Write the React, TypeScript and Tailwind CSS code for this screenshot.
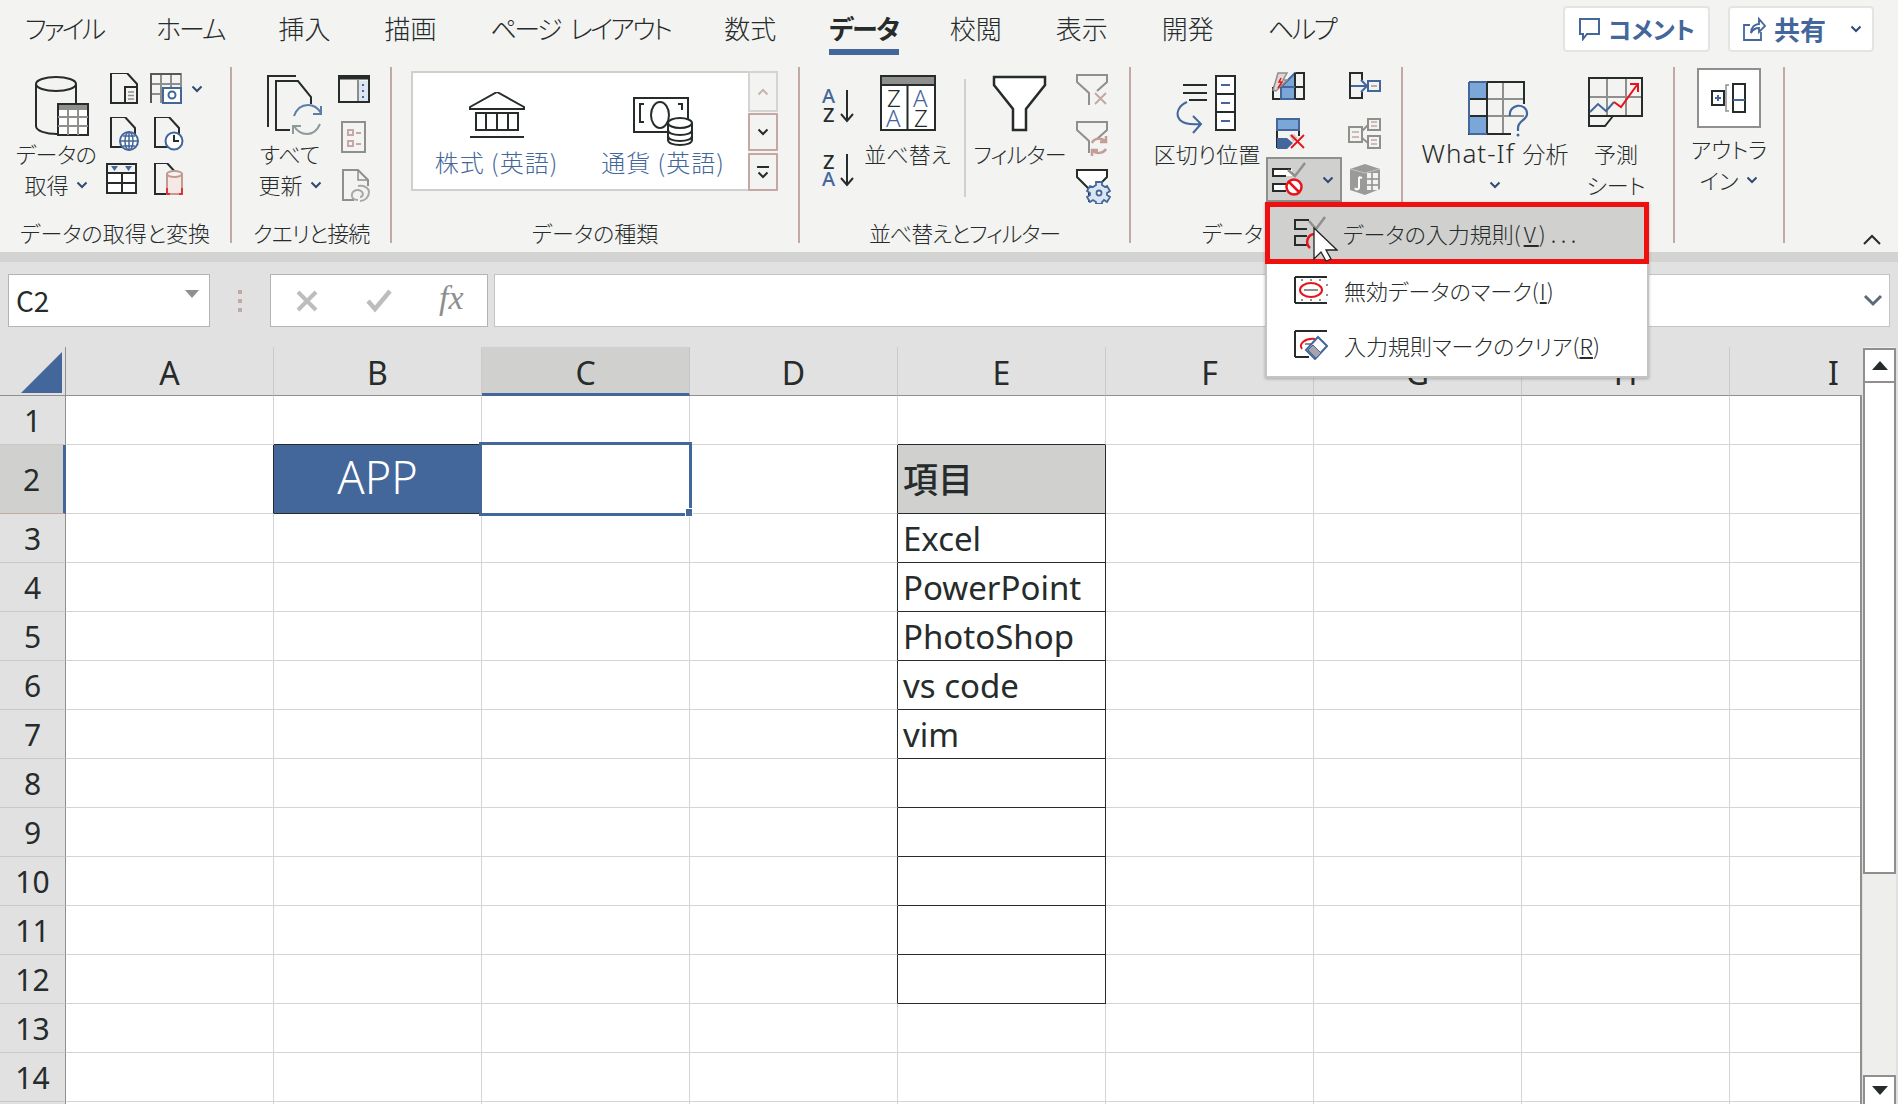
import React from 'react';
import { clsx } from 'clsx';

const D = '#262b2b';
const B = '#44679b';
const G = '#8f8f8d';
const R = '#c4a8a4';
const RED = '#e8141c';
const LB = '#7aa6d8';

function Ic({ x, y, w, h, children, className }: { x: number; y: number; w: number; h: number; children?: React.ReactNode; className?: string }) {
  return (
    <svg width={w} height={h} viewBox={`${x} ${y} ${w} ${h}`} fill="none" className={clsx('block shrink-0', className)}>
      {children}
    </svg>
  );
}
const doc = (x: number, y: number, w: number, h: number) => `M${x + w} ${y + h}H${x}V${y}H${x + w - 10}L${x + w} ${y + 11}V${y + h}`;
const SF = "'Noto Sans','Noto Sans CJK JP',sans-serif";

function Chev({ c = '#2f4a73', w = 12 }: { c?: string; w?: number }) {
  return (
    <svg width={w} height={8} viewBox="0 0 12 8" fill="none" className="block shrink-0">
      <path d="M1.5 1.5 6 6l4.5-4.5" stroke={c} strokeWidth="2" />
    </svg>
  );
}

function Sep() {
  return <div className="w-[2px] h-[176px] mt-[7px] bg-[#c4a8a4] shrink-0" />;
}

function Group({ className, label, labelClass, children }: { className: string; label?: string; labelClass?: string; children: React.ReactNode }) {
  return (
    <section className={clsx('flex flex-col shrink-0', className)}>
      <div className="flex h-[161px]">{children}</div>
      <div className={clsx('text-center text-[22px] leading-[22px] h-[22px] whitespace-nowrap', labelClass)}>{label}</div>
    </section>
  );
}

function Big({ className, icon, l1, l2 }: { className: string; icon: React.ReactNode; l1: React.ReactNode; l2?: React.ReactNode }) {
  return (
    <div className={clsx('flex flex-col items-center pt-[15px] shrink-0', className)}>
      {icon}
      <div className="mt-[1px] text-[22px] leading-[31px] whitespace-nowrap text-center">{l1}</div>
      <div className="flex items-center gap-[7px] text-[22px] leading-[31px] h-[31px] whitespace-nowrap">{l2}</div>
    </div>
  );
}

const TABS: [string, string][] = [
  ['ファイル', 'tracking-[-3px]'],
  ['ホーム', 'tracking-[-2px] -ml-[1px]'],
  ['挿入', ''],
  ['描画', ''],
  ['ページ レイアウト', 'tracking-[-2.6px] [word-spacing:7px]'],
  ['数式', ''],
  ['データ', 'tracking-[-1.3px] -ml-[1px]'],
  ['校閲', '-ml-[3px]'],
  ['表示', ''],
  ['開発', ''],
  ['ヘルプ', 'tracking-[-2.5px]'],
];

function TabBar() {
  return (
    <div className="h-[60px] flex items-start">
      <div className="flex gap-[54px] pl-[25px] text-[26px] leading-[56px] whitespace-nowrap">
        {TABS.map(([t, tr]) =>
          t === 'データ' ? (
            <div key={t} className={clsx('relative font-bold', tr)}>
              {t}
              <div className="absolute left-0 right-0 top-[49px] h-[6px] bg-[#44679b]" />
            </div>
          ) : (
            <div key={t} className={tr}>{t}</div>
          ),
        )}
      </div>
      <div className="ml-auto mr-[24px] mt-[6px] flex gap-[18px] text-[#44679b] font-bold text-[24px] leading-[42px]">
        <div className="w-[147px] h-[46px] bg-white border-2 border-[#e4e4e2] rounded-[4px] flex items-center justify-center gap-[8px]">
          <svg width="22" height="24" viewBox="0 0 22 24" fill="none">
            <path d="M2 2h19v15H9l-4 5v-5H2z" stroke={B} strokeWidth="2" />
          </svg>
          コメント
        </div>
        <div className="w-[146px] h-[46px] bg-white border-2 border-[#e4e4e2] rounded-[4px] flex items-center pl-[12px] gap-[8px] text-[26px]">
          <svg width="24" height="26" viewBox="0 0 24 26" fill="none">
            <path d="M19 16v8H2V9h6M9 17c0-6 4-9 8-9V3l6 7-6 6v-4c-3 0-6 1-8 5z" stroke={B} strokeWidth="1.8" />
          </svg>
          共有
          <span className="ml-[16px] flex"><Chev /></span>
        </div>
      </div>
    </div>
  );
}

function GetData() {
  return (
    <Group className="w-[230px]" label="データの取得と変換">
      <Big
        className="ml-[17px] w-[78px]"
        icon={
          <Ic x={17} y={75} w={78} h={62}>
            <path d="M36 84v42c0 5 10 8 21 8" stroke={D} strokeWidth="2" />
            <path d="M76 84v19" stroke={D} strokeWidth="2" />
            <ellipse cx="56" cy="84" rx="20" ry="7" stroke={D} strokeWidth="2" fill="#f3f3f1" />
            <rect x="58" y="104" width="30" height="31" fill="#fff" stroke={D} strokeWidth="2" />
            <rect x="59" y="105" width="28" height="5" fill={G} />
            <path d="M58 117h30M58 126h30M68 110v25M78 110v25" stroke={G} strokeWidth="2" />
          </Ic>
        }
        l1={<span className="tracking-[-0.5px]">データの</span>}
        l2={<>取得 <Chev /></>}
      />
      <div className="ml-[11px] mt-[13px] grid grid-cols-[44px_60px] grid-rows-[44px_46px_36px]">
        <Ic x={106} y={73} w={44} h={44}>
          <path d={doc(111, 73, 26, 30)} stroke={D} strokeWidth="2" />
          <rect x="125" y="87" width="12" height="16" fill="#f3f3f1" stroke={D} strokeWidth="2" />
          <path d="M128 92h6M128 95.500h6M128 99h6" stroke={G} strokeWidth="1.500" />
        </Ic>
        <div className="flex">
          <Ic x={150} y={73} w={41} h={44}>
            <path d="M151 103V74h30v14M161 74v29M171 74v14M151 84h30M151 94h12" stroke={G} strokeWidth="2" />
            <path d="M151 103V74h30" stroke="#55595a" strokeWidth="2" />
            <rect x="163" y="88" width="18" height="15" fill="#fff" stroke={B} strokeWidth="2" />
            <circle cx="172" cy="95" r="3.500" stroke={B} strokeWidth="2" />
          </Ic>
          <span className="mt-[12px] block"><Chev /></span>
        </div>
        <Ic x={106} y={117} w={44} h={46}>
          <path d={doc(111, 117, 24, 30)} stroke={D} strokeWidth="2" />
          <circle cx="129" cy="141" r="9" fill="#fff" stroke={B} strokeWidth="2" />
          <path d="M120 141h18M129 132v18M123 136h12M123 146h12" stroke={B} strokeWidth="1.500" />
          <ellipse cx="129" cy="141" rx="4" ry="9" stroke={B} strokeWidth="1.500" />
        </Ic>
        <Ic x={150} y={117} w={60} h={46}>
          <path d={doc(155, 117, 24, 30)} stroke={D} strokeWidth="2" />
          <circle cx="174" cy="141" r="8.500" fill="#fff" stroke={B} strokeWidth="2" />
          <path d="M174 135v6h5" stroke={D} strokeWidth="2" />
        </Ic>
        <Ic x={106} y={163} w={44} h={36}>
          <rect x="107" y="164" width="29" height="29" fill="#fff" stroke={D} strokeWidth="2" />
          <path d="M107 173h29M107 183h29M122 173v20" stroke={D} strokeWidth="2" />
          <rect x="108" y="165" width="27" height="7" fill="#f3f3f1" />
          <path d="M111 166h7l-3.500 5zM125 166h7l-3.500 5z" fill={B} />
        </Ic>
        <Ic x={150} y={163} w={60} h={36}>
          <path d={doc(155, 163, 22, 31)} stroke={D} strokeWidth="2" />
          <rect x="167" y="174" width="15" height="20" fill="#f6e8e4" stroke="#c49a90" strokeWidth="2" />
          <ellipse cx="174.500" cy="174" rx="7.500" ry="3" fill="#f3f3f1" stroke="#c49a90" strokeWidth="2" />
          <path d="M167 188v6h3M182 188v6h-3" stroke={RED} strokeWidth="1.500" />
        </Ic>
      </div>
    </Group>
  );
}

function Queries() {
  return (
    <Group className="w-[158px]" label="クエリと接続" labelClass="tracking-[-1px]">
      <Big
        className="ml-[18px] w-[80px]"
        icon={
          <Ic x={258} y={75} w={64} h={62}>
            <path d="M268 127V76h28" stroke={D} strokeWidth="2" />
            <path d="M290 130h-14V81h22l13 16v7" stroke={D} strokeWidth="2" />
            <path d="M294 116c3-8 9-11 14-11 6 0 10 3 13 8M321 106v8h-8" stroke="#5b7ea8" strokeWidth="2" />
            <path d="M320 124c-3 7-8 10-13 10-6 0-10-3-13-8M293 134v-8h8" stroke="#8d9a9c" strokeWidth="2" />
          </Ic>
        }
        l1="すべて"
        l2={<>更新 <Chev /></>}
      />
      <div className="mt-[13px] flex flex-col">
        <Ic x={330} y={73} w={60} h={44}>
          <rect x="339" y="76" width="30" height="26" stroke={D} strokeWidth="2" />
          <path d="M339 78h30" stroke={D} strokeWidth="3" />
          <path d="M358 80v22" stroke={D} strokeWidth="1" />
          <rect x="359" y="81" width="9" height="20" fill="#dbe5f1" />
          <path d="M363 84v2M363 90v2M363 96v2" stroke={B} strokeWidth="2" />
        </Ic>
        <Ic x={330} y={117} w={60} h={46}>
          <rect x="342" y="122" width="23" height="30" stroke={G} strokeWidth="2" />
          <rect x="348" y="130" width="5" height="5" stroke={R} strokeWidth="2" />
          <rect x="348" y="141" width="5" height="5" stroke={R} strokeWidth="2" />
          <path d="M356 133h5M356 144h5" stroke={R} strokeWidth="2" />
        </Ic>
        <Ic x={330} y={163} w={60} h={44}>
          <path d="M354 200h-11v-30h15l10 10v6" stroke={G} strokeWidth="2" />
          <path d="M358 170v10h10" stroke={G} strokeWidth="1.500" />
          <path d="M358 200c-5 0-7-3-6-6 1-4 6-5 9-3 3 2 2 6-1 6M358 186c6-1 11 2 11 6 0 5-4 9-9 9" stroke="#a8a8a6" strokeWidth="2" />
        </Ic>
      </div>
    </Group>
  );
}

function DataTypes() {
  return (
    <Group className="w-[406px]" label="データの種類">
      <div className="ml-[19px] mt-[11px] flex">
        <div className="w-[337px] h-[120px] bg-white border-2 border-r-0 border-[#cfcfcd] flex text-[24px] tracking-[1px] leading-[30px] text-[#44679b] whitespace-nowrap">
          <div className="w-[167px] flex flex-col items-center pt-[19px]">
            <Ic x={466} y={92} w={60} h={54}>
              <path d="M469 107 496 92l27 15v2h-54zM474 113h44M474 130h44M469 137h54" stroke={D} strokeWidth="2" />
              <path d="M475 113v17M485 113v17M496 113v17M507 113v17M517 113v17" stroke={D} strokeWidth="2" />
            </Ic>
            <div className="mt-[1px]">株式 (英語)</div>
          </div>
          <div className="w-[166px] flex flex-col items-center pt-[19px]">
            <Ic x={635} y={92} w={60} h={54}>
              <rect x="636" y="98" width="54" height="34" stroke={D} strokeWidth="2" />
              <path d="M646 122h-4v-18h4M680 104h4v6" stroke={D} strokeWidth="2" />
              <ellipse cx="662" cy="115" rx="9" ry="13" stroke={D} strokeWidth="2" />
              <path d="M670 123v17c0 3 5 5 12 5s12-2 12-5v-17" fill="#fff" stroke={D} strokeWidth="2" />
              <ellipse cx="682" cy="123" rx="12" ry="5" fill="#fff" stroke={D} strokeWidth="2" />
              <path d="M670 130c0 3 5 5 12 5s12-2 12-5M670 136c0 3 5 5 12 5s12-2 12-5" stroke={D} strokeWidth="2" />
            </Ic>
            <div className="mt-[1px]">通貨 (英語)</div>
          </div>
        </div>
        <div className="w-[30px] flex flex-col">
          <div className="h-[41px] border-2 border-[#d4d4d2] flex items-center justify-center">
            <span className="rotate-180 flex"><Chev c="#c9b3af" /></span>
          </div>
          <div className="h-[38px] mt-[1px] border-2 border-[#c4a8a4] flex items-center justify-center"><Chev c={D} /></div>
          <div className="h-[38px] mt-[2px] border-2 border-[#c4a8a4] flex flex-col items-center justify-center gap-[3px]">
            <div className="w-[12px] h-[2px] bg-[#262b2b]" />
            <Chev c={D} />
          </div>
        </div>
      </div>
    </Group>
  );
}

const txt = { fontFamily: SF };

function SortFilter() {
  return (
    <Group className="w-[329px]" label="並べ替えとフィルター" labelClass="tracking-[-1.1px]">
      <div className="ml-[20px] w-[36px] pt-[24px] flex flex-col shrink-0">
        <Ic x={820} y={84} w={36} h={66}>
          <text x="822" y="103" fontSize="20" fontWeight="500" fill={B} {...txt}>A</text>
          <text x="823" y="122" fontSize="20" fontWeight="500" fill={D} {...txt}>Z</text>
          <path d="M847 90v31M841 114l6 7 6-7" stroke={D} strokeWidth="2" />
        </Ic>
        <Ic x={820} y={150} w={36} h={40}>
          <text x="823" y="169" fontSize="20" fontWeight="500" fill={D} {...txt}>Z</text>
          <text x="822" y="186" fontSize="20" fontWeight="500" fill={B} {...txt}>A</text>
          <path d="M847 154v31M841 178l6 7 6-7" stroke={D} strokeWidth="2" />
        </Ic>
      </div>
      <Big
        className="w-[103px]"
        icon={
          <Ic x={879} y={75} w={58} h={62}>
            <rect x="881" y="76" width="54" height="54" fill="#fff" stroke={D} strokeWidth="2" />
            <rect x="882" y="77" width="52" height="7" fill={G} />
            <path d="M881 85h54M907.500 85v45" stroke={D} strokeWidth="2" />
            <text x="887" y="107" fontSize="24" fill={D} {...txt}>Z</text>
            <text x="886" y="127" fontSize="24" fill={B} {...txt}>A</text>
            <text x="913" y="107" fontSize="24" fill={B} {...txt}>A</text>
            <text x="914" y="127" fontSize="24" fill={D} {...txt}>Z</text>
          </Ic>
        }
        l1="並べ替え"
      />
      <div className="ml-[5px] w-[2px] h-[118px] mt-[19px] bg-[#d0d0ce] shrink-0" />
      <Big
        className="w-[107px]"
        icon={
          <Ic x={990} y={75} w={62} h={62}>
            <path d="M995 77h51v8l-19 24v21h-13v-21l-19-24z" fill="#fff" stroke={D} strokeWidth="2.500" />
          </Ic>
        }
        l1={<span className="tracking-[-0.8px]">フィルター</span>}
      />
      <div className="mt-[13px] flex flex-col">
        <Ic x={1073} y={73} w={38} h={48}>
          <path d="M1089 105V93L1077 82V75h30v7l-10 9" stroke={G} strokeWidth="2" />
          <path d="M1095 93l11 11M1106 93l-11 11" stroke={R} strokeWidth="2" />
        </Ic>
        <Ic x={1073} y={121} w={38} h={47}>
          <path d="M1089 153V141L1077 130V122h30v8l-10 9" stroke={G} strokeWidth="2" />
          <path d="M1092 143c2-5 10-6 14-1M1106 149c-3 5-10 5-14 1M1106 136v6h-6M1092 156v-6h6" stroke="#c29e99" strokeWidth="2.500" />
        </Ic>
        <Ic x={1073} y={168} w={38} h={36}>
          <path d="M1090 201h-1V189L1077 177V170h30v7l-10 10" stroke={D} strokeWidth="2" fill="#fff" />
          <path d="M1096 186v-3h6v3l3 2 2-1 3 5-3 2v2l3 2-3 5-3-2-2 2v2h-6v-2l-3-2-3 2-3-5 3-2v-2l-3-2 3-5 3 1z" fill="#dbe5f1" stroke={B} strokeWidth="1.800" transform="translate(0 -1)" />
          <circle cx="1099" cy="193" r="2.500" fill="#fff" stroke={B} strokeWidth="1.800" />
        </Ic>
      </div>
    </Group>
  );
}

function DataTools() {
  return (
    <Group className="w-[270px]" label="データ ツール">
      <Big
        className="ml-[21px] w-[110px]"
        icon={
          <Ic x={1172} y={75} w={68} h={62}>
            <path d="M1182 85h24M1182 93h24M1188 100h18" stroke={D} strokeWidth="2" />
            <rect x="1215" y="76" width="19" height="54" fill="#fff" stroke={D} strokeWidth="2" />
            <path d="M1215 94h19M1215 112h19" stroke={D} strokeWidth="2" />
            <path d="M1220 85h9M1220 103h9M1220 121h9" stroke={B} strokeWidth="2" />
            <path d="M1186 102c-9 4-12 12-7 18 3 3 10 5 21 4M1192 116l8 8-8 9" stroke={B} strokeWidth="2" />
          </Ic>
        }
        l1="区切り位置"
      />
      <div className="ml-[4px] mt-[12px] w-[76px] flex flex-col shrink-0">
        <Ic x={1266} y={72} w={76} h={45}>
          <path d="M1273 87v12h31V73h-9" stroke={D} strokeWidth="2" />
          <path d="M1295 73 1281 87v12h14z" fill={LB} stroke={B} strokeWidth="2" />
          <path d="M1273 87h31M1295 73v26" stroke={D} strokeWidth="2" />
          <path d="M1281 87h14" stroke={B} strokeWidth="2" />
          <path d="M1273 90l5-17h9l-4 7h4l-11 11z" fill="#e0d8d4" stroke={G} strokeWidth="1.500" />
          <path d="M1281 78l-2 4h3l-4 6" stroke={RED} strokeWidth="1.500" />
        </Ic>
        <Ic x={1266} y={117} w={76} h={40}>
          <path d="M1277 119v29M1299 119v17" stroke={D} strokeWidth="2" />
          <rect x="1277" y="119" width="22" height="11" fill={LB} stroke={B} strokeWidth="2" />
          <path d="M1277 138h10l6 5-6 6h-10z" fill={B} />
          <path d="M1289 135l5-1 4 4-5 4z" fill="#d0c8c4" />
          <path d="M1291 135l13 13M1304 135l-13 13" stroke={RED} strokeWidth="1.800" />
        </Ic>
        <div className="h-[45px] w-[76px] bg-[#d0d0ce] border-2 border-[#8f8f8d] flex items-center gap-[15px]">
          <Ic x={1268} y={159} w={39} h={41}>
            <path d="M1292 169h-18v7h18zM1292 184h-18v7h18z" fill="#fff" />
            <path d="M1291 169h-18v7h13M1286 184h-13v7h13" stroke={D} strokeWidth="2" />
            <path d="M1288 170l7 6 10-13" stroke={G} strokeWidth="2.500" />
            <circle cx="1294" cy="187" r="7.500" stroke={RED} strokeWidth="2.500" fill="#fff" />
            <path d="M1289 182l10 10" stroke={RED} strokeWidth="2.500" />
          </Ic>
          <Chev />
        </div>
      </div>
      <div className="ml-[2px] mt-[12px] flex flex-col">
        <Ic x={1344} y={72} w={40} h={45}>
          <path d="M1362 80v-7h-12v25h12v-6" stroke={D} strokeWidth="2" />
          <path d="M1351 86h16M1361 80l6 6-6 6" stroke={B} strokeWidth="2" />
          <rect x="1368" y="81" width="12" height="10" stroke={B} strokeWidth="2" />
          <path d="M1371 86h6" stroke={R} strokeWidth="2" />
        </Ic>
        <Ic x={1344} y={117} w={40} h={46}>
          <rect x="1349" y="127" width="13" height="15" stroke={G} strokeWidth="2" />
          <rect x="1368" y="119" width="12" height="11" stroke={G} strokeWidth="2" />
          <rect x="1368" y="136" width="12" height="12" stroke={G} strokeWidth="2" />
          <path d="M1362 131l6-6M1362 138l6 5" stroke={G} strokeWidth="2" />
          <path d="M1352 132h7M1352 137h7M1371 122h6M1371 126h6M1371 140h6M1371 144h6" stroke={R} strokeWidth="1.500" />
        </Ic>
        <Ic x={1344} y={163} w={40} h={36}>
          <path d="M1350 169l15-5 15 5v20l-15 6-15-5z" fill="#9a9a98" />
          <path d="M1350 169l15 4 15-4" stroke="#c4c4c2" strokeWidth="1" />
          <rect x="1367" y="173" width="11" height="17" fill="#f3f3f1" />
          <path d="M1372 173v17M1367 179h11M1367 185h11" stroke={G} strokeWidth="1.500" />
          <path d="M1359 177v10c0 3-3 3-4 1M1359 177l3 1" stroke="#fff" strokeWidth="2" />
        </Ic>
      </div>
    </Group>
  );
}

function Forecast() {
  return (
    <Group className="w-[270px]" label="予測">
      <Big
        className="ml-[16px] w-[152px]"
        icon={
          <Ic x={1461} y={75} w={68} h={62}>
            <rect x="1469" y="82" width="18" height="17" fill={LB} />
            <rect x="1469" y="116" width="18" height="17" fill={LB} />
            <path d="M1486 99h38M1486 116h38M1503 82v52" stroke={G} strokeWidth="2" />
            <path d="M1469 99h18M1469 116h18M1487 82v52M1469 82v52h42M1469 82h55v22" stroke={D} strokeWidth="2" />
            <path d="M1469 82v52M1469 82h18M1469 134h18" stroke={B} strokeWidth="2" />
            <path d="M1510 116c-2-12 16-14 17-3 1 7-9 7-9 15v3" stroke={B} strokeWidth="2.200" fill="none" />
            <circle cx="1518" cy="135" r="1.500" fill={B} />
          </Ic>
        }
        l1={
          <span className="font-['Noto_Sans','Noto_Sans_CJK_JP',sans-serif] text-[26px] tracking-[1px]">
            What-If <span className="font-['Noto_Sans_CJK_JP',sans-serif] text-[23px] tracking-normal">分析</span>
          </span>
        }
        l2={<Chev />}
      />
      <Big
        className="w-[90px]"
        icon={
          <Ic x={1586} y={75} w={60} h={62}>
            <path d="M1607 78v38M1626 78v38M1589 97h53" stroke={G} strokeWidth="2" />
            <rect x="1589" y="78" width="53" height="38" stroke={D} strokeWidth="2" />
            <path d="M1589 116v10h16l8-10" stroke={D} strokeWidth="2" />
            <path d="M1590 112l8-8 8 7 8-9" stroke={B} strokeWidth="2" />
            <path d="M1614 102l7 5 16-22M1630 84h8v8" stroke={RED} strokeWidth="2" />
          </Ic>
        }
        l1="予測"
        l2="シート"
      />
    </Group>
  );
}

function Outline() {
  return (
    <section className="w-[108px] shrink-0 flex flex-col items-center pt-[8px] text-[22px] leading-[31px] whitespace-nowrap">
      <div className="w-[64px] h-[60px] bg-white border-2 border-[#8f8f8d] flex items-center justify-center">
        <svg width="36" height="34" viewBox="0 0 36 34" fill="none">
          <rect x="1" y="10" width="12" height="14" stroke={D} strokeWidth="2" />
          <path d="M7 14v6M4 17h6" stroke={B} strokeWidth="2" />
          <path d="M18 4h-3v26h3" stroke={G} strokeWidth="1.500" />
          <rect x="22" y="3" width="12" height="28" stroke={D} strokeWidth="2" />
          <path d="M22 19h12" stroke={B} strokeWidth="2" />
        </svg>
      </div>
      <div className="mt-[5px]">アウトラ</div>
      <div className="flex items-center gap-[8px]">イン <Chev /></div>
    </section>
  );
}

function Ribbon() {
  return (
    <div className="h-[192px] flex">
      <GetData />
      <Sep />
      <Queries />
      <Sep />
      <DataTypes />
      <Sep />
      <SortFilter />
      <Sep />
      <DataTools />
      <Sep />
      <Forecast />
      <Sep />
      <Outline />
      <Sep />
      <svg width="20" height="13" viewBox="0 0 20 13" fill="none" className="ml-[77px] mt-[173px] shrink-0">
        <path d="M2 11 10 3l8 8" stroke={D} strokeWidth="2" />
      </svg>
    </div>
  );
}

function FormulaBar() {
  return (
    <div className="h-[85px] bg-[#e1e1e1] flex pt-[12px] items-start font-normal">
      <div className="ml-[8px] w-[202px] h-[53px] bg-white border border-[#b4b4b2] flex items-center pl-[7px] text-[28px] leading-[57px]">
        C2
        <svg width="14" height="8" viewBox="0 0 14 8" className="ml-auto mr-[10px] mb-[14px]">
          <path d="M0 0h14L7 8z" fill="#8f8f8d" />
        </svg>
      </div>
      <div className="ml-[28px] w-[4px] mt-[16px] flex flex-col gap-[5px]">
        <div className="h-[4px] bg-[#c4a8a4]" />
        <div className="h-[4px] bg-[#c4a8a4]" />
        <div className="h-[4px] bg-[#c4a8a4]" />
      </div>
      <div className="ml-[28px] w-[218px] h-[53px] bg-white border border-[#b4b4b2] flex items-center">
        <svg width="24" height="24" viewBox="0 0 24 24" fill="none" className="ml-[24px]">
          <path d="M3 3l18 18M21 3 3 21" stroke="#bdbdbb" strokeWidth="4" />
        </svg>
        <svg width="28" height="24" viewBox="0 0 28 24" fill="none" className="ml-[46px]">
          <path d="M3 12l7 8L25 2" stroke="#bdbdbb" strokeWidth="4.500" />
        </svg>
        <span className="ml-[46px] font-['Liberation_Serif',serif] italic text-[34px] leading-[40px] text-[#8f8f8d] -mt-[6px]">fx</span>
      </div>
      <div className="ml-[6px] mr-[8px] flex-1 h-[53px] bg-white border border-[#c4c4c2] flex items-center justify-end pr-[6px]">
        <svg width="20" height="13" viewBox="0 0 20 13" fill="none">
          <path d="M2 2l8 8 8-8" stroke="#5b6b7c" strokeWidth="3" />
        </svg>
      </div>
    </div>
  );
}

const COLS = ['A', 'B', 'C', 'D', 'E', 'F', 'G', 'H', 'I'];
const ROWS = Array.from({ length: 15 }, (_, i) => i + 1);
const TABLE: Record<number, string> = { 3: 'Excel', 4: 'PowerPoint', 5: 'PhotoShop', 6: 'vs code', 7: 'vim' };

function Cell({ r, c }: { r: number; c: number }) {
  const inTable = c === 4 && r >= 2 && r <= 12;
  const darkRight = inTable || (c === 3 && r >= 2 && r <= 12) || (c === 0 && r === 2);
  const darkBottom = inTable || (c === 4 && r === 1) || (c === 1 && (r === 1 || r === 2));
  const base = clsx(
    'relative border-r border-b min-w-0 overflow-visible',
    darkRight ? 'border-r-[#262b2b]' : 'border-r-[#d4d4d4]',
    darkBottom ? 'border-b-[#262b2b]' : 'border-b-[#d4d4d4]',
  );
  if (r === 2 && c === 1) {
    return (
      <div className={clsx(base, "bg-[#44679b] text-white text-center text-[45px] leading-[64px] font-['Noto_Sans',sans-serif] font-light")}>APP</div>
    );
  }
  if (r === 2 && c === 2) {
    return (
      <div className={clsx(base, 'bg-white')}>
        <div className="absolute left-[-3px] top-[-3px] right-[-3px] bottom-[-3px] border-[3px] border-[#44679b] z-10">
          <div className="absolute right-[-4px] bottom-[-4px] w-[8px] h-[9px] bg-[#44679b] border border-white" />
        </div>
      </div>
    );
  }
  if (r === 2 && c === 4) {
    return <div className={clsx(base, "bg-[#d0d0ce] pl-[5px] text-[35px] leading-[66px] font-medium font-['Noto_Sans_CJK_JP',sans-serif]")}>項目</div>;
  }
  if (c === 4 && TABLE[r]) {
    return <div className={clsx(base, 'pl-[5px] text-[33px] leading-[49px]')}>{TABLE[r]}</div>;
  }
  return <div className={clsx(base, 'bg-white')} />;
}

function Sheet() {
  return (
    <div className="flex h-[757px] font-normal">
      <div className="flex-1 min-w-0 overflow-hidden bg-white">
        <div className="grid grid-cols-[66px_repeat(9,208px)] grid-rows-[49px_49px_69px_repeat(13,49px)] w-[1938px] font-['Noto_Sans',sans-serif]">
          <div className="bg-[#e1e1e1] border-b border-r border-[#8f8f8d] flex justify-end items-end pr-[3px] pb-[2px]">
            <svg width="41" height="41" viewBox="0 0 41 41">
              <path d="M41 0v41H0z" fill="#44679b" />
            </svg>
          </div>
          {COLS.map((h, i) => (
            <div
              key={h}
              className={clsx(
                'text-center text-[32px] leading-[52px]',
                i === 2 ? 'bg-[#d0d0ce] border-b-[3px] border-b-[#44679b] border-r border-r-[#c4c4c4]' : 'bg-[#e1e1e1] border-b border-b-[#8f8f8d] border-r border-r-[#cacaca]',
              )}
            >
              {h}
            </div>
          ))}
          {ROWS.map((r) => (
            <React.Fragment key={r}>
              <div
                className={clsx(
                  'text-center text-[30px] border-b',
                  r === 2 ? 'bg-[#d0d0ce] border-r-[3px] border-r-[#44679b] border-b-[#c4a8a4] leading-[70px]' : 'leading-[50px] bg-[#e1e1e1] border-r border-r-[#8f8f8d] border-b-[#c9c9c9]',
                )}
              >
                {r}
              </div>
              {COLS.map((_, c) => (
                <Cell key={c} r={r} c={c} />
              ))}
            </React.Fragment>
          ))}
        </div>
      </div>
      <div className="w-[38px] shrink-0 flex bg-[#e1e1e1]">
        <div className="w-[3px] flex flex-col">
          <div className="h-[48px]" />
          <div className="flex-1 bg-[#8f8f8d] mr-[1px]" />
        </div>
        <div className="w-[33px] flex flex-col pt-[1px] bg-[#eeeeec]">
          <div className="h-[35px] bg-white border-2 border-[#8f8f8d] flex items-center justify-center">
            <svg width="16" height="9" viewBox="0 0 16 9"><path d="M8 0l8 9H0z" fill={D} /></svg>
          </div>
          <div className="h-[491px] bg-white border-2 border-t-0 border-[#8f8f8d]" />
          <div className="flex-1" />
          <div className="h-[29px] bg-white border-2 border-b-0 border-[#8f8f8d] flex items-center justify-center">
            <svg width="16" height="9" viewBox="0 0 16 9"><path d="M8 9 16 0H0z" fill={D} /></svg>
          </div>
        </div>
      </div>
    </div>
  );
}

function Menu() {
  return (
    <div className="absolute left-[1265px] top-[202px] w-[384px] h-[176px] bg-white border-2 border-[#c4c4c2] text-[22px] leading-[30px] whitespace-nowrap z-20 shadow-[0_1px_3px_rgba(0,0,0,0.25)]">
      <div className="-m-[2px] h-[62px] border-[5px] border-[#f00f0f] bg-[#d0d0ce] flex items-center relative">
        <svg width="36" height="34" viewBox="0 0 36 34" fill="none" className="ml-[24px] shrink-0">
          <path d="M15 4H1v9h12M13 20H1v9h13" stroke={D} strokeWidth="2" />
          <path d="M15 5l7 8L31 1" stroke={G} strokeWidth="2.500" />
          <path d="M20 18a8 8 0 0 0-4 14" stroke={RED} strokeWidth="2.500" />
        </svg>
        <div className="ml-[13px]">
          データの入力規則<span className="tracking-[3px]">(<span className="underline">V</span>)</span><span className="tracking-[4.5px] ml-[2px]">...</span>
        </div>
        <svg width="25" height="35" viewBox="0 0 25 35" className="absolute left-[43px] top-[20px]">
          <path d="M1 1v31l7-7 5 9 5-2-5-9h11z" fill="#fff" stroke="#222" strokeWidth="1.300" />
        </svg>
      </div>
      <div className="h-[55px] flex items-center">
        <svg width="34" height="28" viewBox="0 0 34 28" fill="none" className="ml-[27px]">
          <path d="M1 1h32M1 27h32M1 1v26" stroke={D} strokeWidth="2" />
          <path d="M8 3v2M17 3v2M26 3v2M33 8v2M33 18v2M8 23v2M17 23v2M26 23v2" stroke={G} strokeWidth="2" />
          <ellipse cx="17" cy="14" rx="11" ry="7" stroke={RED} strokeWidth="2" />
          <path d="M10 14h14" stroke={G} strokeWidth="2" />
        </svg>
        <div className="ml-[16px]">無効データのマーク<span className="tracking-[1px]">(<span className="underline">I</span>)</span></div>
      </div>
      <div className="h-[55px] flex items-center">
        <svg width="34" height="30" viewBox="0 0 34 30" fill="none" className="ml-[27px]">
          <path d="M1 1h32M1 27h14M1 1v26" stroke={D} strokeWidth="2" />
          <path d="M8 19c-4-5 3-11 13-10" stroke={RED} strokeWidth="2" />
          <path d="M11 14h9" stroke={G} strokeWidth="2" />
          <path d="M24 7l9 9-12 13-9-9z" fill="#fff" stroke={B} strokeWidth="2" />
          <path d="M14 20l5-5 8 8-5 5z" fill="#a8a4ac" stroke={B} strokeWidth="1" />
        </svg>
        <div className="ml-[16px]">入力規則マークのクリア(<span className="underline">R</span>)</div>
      </div>
    </div>
  );
}

export default function App() {
  return (
    <div className="relative w-[1898px] h-[1104px] overflow-hidden bg-[#f3f3f1] text-[#262b2b] font-['Noto_Sans_CJK_JP','Noto_Sans',sans-serif] font-light [font-feature-settings:'palt']">
      <TabBar />
      <Ribbon />
      <div className="h-[10px] bg-[#d3d3d1]" />
      <FormulaBar />
      <Sheet />
      <Menu />
    </div>
  );
}
